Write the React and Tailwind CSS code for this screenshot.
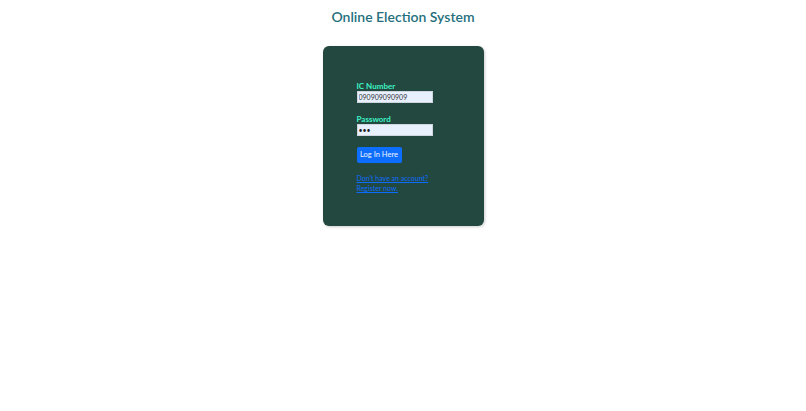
import React from 'react';

const App = () => {
  return (
    <div className="min-h-[411px] w-full bg-white" style={{ fontFamily: 'Lato, "Noto Sans", sans-serif' }}>
      <h1 className="pt-[7px] text-center text-[14px] font-semibold leading-[20px] text-[#256f7c]">
        Online Election System
      </h1>
      <div className="mx-auto mt-[19px] h-[180px] w-[161px] rounded-[6px] bg-[#234840] pl-[34px] pt-[35px] shadow-[1px_1px_3px_rgba(0,0,0,0.2)]">
        <form className="flex flex-col">
          <label className="text-[8px] font-bold leading-[10px] text-[#3ef2c4]">IC Number</label>
          <input
            type="text"
            defaultValue="090909090909"
            className="h-[12px] w-[76px] border border-[#cfd6e0] bg-[#e8f0fe] px-[1px] text-[7px] leading-[10px] text-[#333] outline-none"
          />
          <label className="mt-[11px] text-[8px] font-bold leading-[10px] text-[#3ef2c4]">Password</label>
          <input
            type="password"
            defaultValue="abc"
            className="h-[12px] w-[76px] border border-[#cfd6e0] bg-[#e8f0fe] px-[1px] text-[7px] leading-[10px] text-[#222] outline-none"
          />
          <button
            type="button"
            className="mt-[11px] h-[16px] w-[45px] rounded-[2px] bg-[#0d6efd] text-[7.5px] leading-[16px] text-[#eef3ff]"
          >
            Log In Here
          </button>
          <div className="mt-[10px] text-[7px] leading-[10px] text-[#0d6efd]">
            <a href="#" className="underline">Don't have an account?</a>
            <br />
            <a href="#" className="underline">Register now.</a>
          </div>
        </form>
      </div>
    </div>
  );
};

export default App;
